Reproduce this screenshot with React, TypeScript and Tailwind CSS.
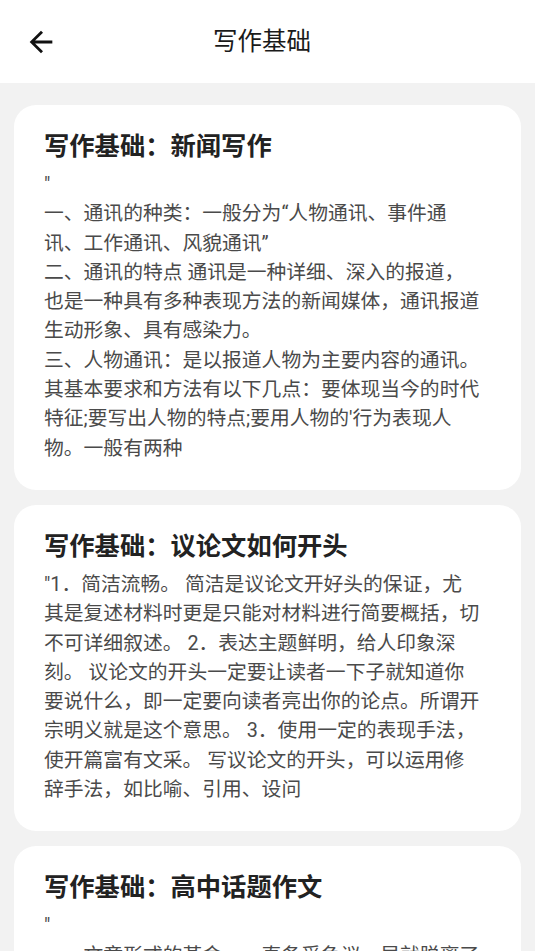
const font = { fontFamily: 'Roboto, "Noto Sans CJK SC", sans-serif' };

// lines are broken where the app's text view breaks them
const articles = [
  {
    title: '写作基础：新闻写作',
    lines: [
      '"',
      '一、通讯的种类：一般分为“人物通讯、事件通',
      '讯、工作通讯、风貌通讯”',
      '二、通讯的特点 通讯是一种详细、深入的报道，',
      '也是一种具有多种表现方法的新闻媒体，通讯报道',
      '生动形象、具有感染力。',
      '三、人物通讯：是以报道人物为主要内容的通讯。',
      '其基本要求和方法有以下几点：要体现当今的时代',
      "特征;要写出人物的特点;要用人物的'行为表现人",
      '物。一般有两种',
    ],
  },
  {
    title: '写作基础：议论文如何开头',
    lines: [
      '"1．简洁流畅。 简洁是议论文开好头的保证，尤',
      '其是复述材料时更是只能对材料进行简要概括，切',
      '不可详细叙述。 2．表达主题鲜明，给人印象深',
      '刻。 议论文的开头一定要让读者一下子就知道你',
      '要说什么，即一定要向读者亮出你的论点。所谓开',
      '宗明义就是这个意思。 3．使用一定的表现手法，',
      '使开篇富有文采。 写议论文的开头，可以运用修',
      '辞手法，如比喻、引用、设问',
    ],
  },
  {
    title: '写作基础：高中话题作文',
    lines: [
      '"',
      '　　文章形式的革命，一直备受争议，早就脱离了',
      '命题作文的束缚，话题作文给了学生更大的写作空',
      '间。',
    ],
  },
];

function BackArrow() {
  return (
    <svg width="34" height="34" viewBox="0 0 24 24" fill="#111">
      <path d="M20 11H7.83l5.59-5.59L12 4l-8 8 8 8 1.41-1.41L7.83 13H20v-2z" />
    </svg>
  );
}

export default function App() {
  return (
    <div className="min-h-[951px] bg-[#f2f2f2]" style={font}>
      {/* Toolbar */}
      <header className="grid h-[83px] grid-cols-[1fr_auto_1fr] items-center bg-white pr-[11px]">
        <div className="pl-[24px]">
          <BackArrow />
        </div>
        <h1 className="text-[24.5px] leading-[32px] text-[#1a1a1a]">写作基础</h1>
        <div />
      </header>

      {/* Articles */}
      <main className="flex flex-col gap-[15px] px-[14px] pt-[22px] pb-4">
        {articles.map(a => (
          <section key={a.title} className="rounded-[22px] bg-white px-[30px] pt-[25px] pb-[27px]">
            <h2 className="text-[25.3px] font-bold leading-[34px] text-[#222]">{a.title}</h2>
            <p className="mt-[6px] whitespace-pre text-[19.8px] leading-[29.3px] text-[#4a4a4a]">
              {a.lines.join('\n')}
            </p>
          </section>
        ))}
      </main>
    </div>
  );
}
